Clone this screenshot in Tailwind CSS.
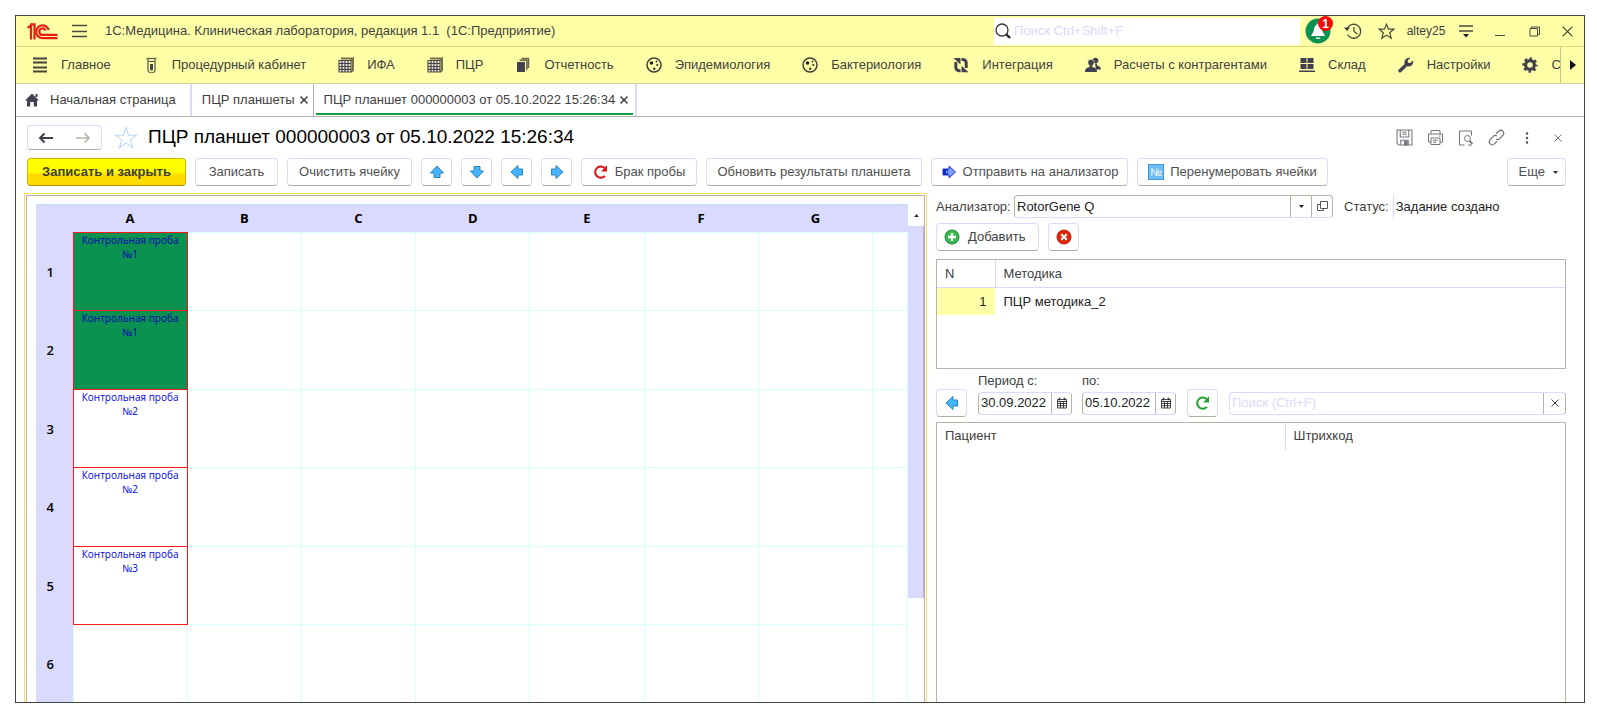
<!DOCTYPE html>
<html lang="ru">
<head>
<meta charset="utf-8">
<title>1С:Медицина. Клиническая лаборатория</title>
<script src="https://cdn.jsdelivr.net/npm/@tailwindcss/browser@4"></script>
</head>
<body class="flex h-screen flex-col overflow-hidden bg-white px-[15px] pt-[15px] pb-[14px] font-['Liberation_Sans',Arial,sans-serif] text-[13px] text-[#404040]">

<svg class="hidden" aria-hidden="true">
  <defs>
    <symbol id="arrow" viewBox="0 0 16 16"><path d="M8 2 14.500 9H11v4.500H5V9H1.500z" fill="#46b4ff" stroke="#2a86b8" stroke-width="1" stroke-linejoin="round"/></symbol>
    <symbol id="plate" viewBox="0 0 16 16"><path d="M13 3.500 15 1.500V13l-2 2M3 1.500h12" fill="none" stroke="#77704c" stroke-width="2"/><path d="M1 3.500h12V15H1z" fill="#f4f0d8" stroke="#55503c" stroke-width="1.200"/><path d="M4 3.500V15M7 3.500V15M10 3.500V15M1 6.500h12M1 9.500h12M1 12.300h12" stroke="#404050" stroke-width="1.200"/></symbol>
    <symbol id="germ" viewBox="0 0 16 16"><circle cx="8" cy="8" r="7" fill="none" stroke="#403f3a" stroke-width="1.500"/><circle cx="5.500" cy="6" r="1.800" fill="#222"/><circle cx="10.500" cy="4.500" r=".9" fill="#333"/><circle cx="11.300" cy="8" r="1.100" fill="#333"/><circle cx="8.200" cy="11.800" r="1.200" fill="#333"/></symbol>
    <symbol id="cross" viewBox="0 0 10 10"><path d="M1.500 1.500l7 7M8.500 1.500l-7 7" stroke="currentColor" fill="none"/></symbol>
    <symbol id="calendar" viewBox="0 0 12 12"><path d="M1.500 2.500h9v8.500h-9zM1.500 4.500h9M4.500 4.500V11M7.500 4.500V11M1.500 6.500h9M1.500 8.700h9" fill="none" stroke="#333" stroke-width=".9"/><path d="M3.500.8v2.400M8.500.8v2.400" stroke="#333" stroke-width="1.500"/></symbol>
    <symbol id="reload" viewBox="0 0 16 16"><path d="M12 11.800A5.600 5.600 0 1 1 11.600 4" fill="none" stroke="currentColor" stroke-width="2"/><path d="M14 1.200V7.500H8.200z" fill="currentColor"/></symbol>
  </defs>
</svg>

<div class="flex min-h-0 flex-1 flex-col overflow-hidden border border-[#45453c]">

  <!-- Title bar -->
  <header class="flex h-[31px] shrink-0 items-center border-b border-[#e3d578] bg-[#ffffa8]">
    <svg class="ml-[11px] h-[17px] w-[31px] shrink-0" viewBox="0 0 31 17" fill="none" stroke="#ea1c14" role="img" aria-label="1С">
      <path d="M.5 5 4 2.300V16.500" stroke-width="2.200"/><path d="M3.500 1.300H7.500V16.500" stroke-width="2.200"/>
      <path d="M21.700 7A6.400 6.400 0 1 0 15.800 15.200H30.500" stroke-width="2.200"/>
      <path d="M18.500 7.500A3.200 3.200 0 1 0 15.800 11.800H30.500" stroke-width="2.200"/>
    </svg>
    <button class="ml-[13px] h-6 w-[17px]" aria-label="Меню"><svg class="h-4 w-[17px]" viewBox="0 0 17 16"><path d="M1 2.500h15M1 8.500h15M1 13.500h15" stroke="#4b4a3c" stroke-width="1.300"/></svg></button>
    <h1 class="ml-[17px] whitespace-pre">1С:Медицина. Клиническая лаборатория, редакция 1.1  (1С:Предприятие)</h1>
    <label class="ml-auto flex h-[27px] w-[306px] items-center gap-[3px] bg-white pl-px">
      <svg class="size-4 shrink-0" viewBox="0 0 16 16"><circle cx="7" cy="7" r="6" fill="none" stroke="#3a3a30" stroke-width="1.300"/><path d="M11.500 11.500l3.500 3.500" stroke="#222" stroke-width="2.400"/></svg>
      <input class="min-w-0 flex-1 outline-none placeholder:text-[#dadaff]" type="text" placeholder="Поиск Ctrl+Shift+F" aria-label="Поиск">
    </label>
    <div class="flex items-center">
      <button class="relative flex w-[36px] justify-center" aria-label="Оповещения">
        <svg class="size-[26px]" viewBox="0 0 26 26"><circle cx="13" cy="13" r="12.500" fill="#0b9150"/><path d="M13 5.500c-1 0-1.500.7-1.500 1.500-2 1-2.500 3-2.800 6L6 18h14l-2.700-5c-.3-3-.8-5-2.800-6 0-.8-.5-1.500-1.500-1.500z" fill="#fff"/><path d="M10.500 19.500h5c-.5 2-4.500 2-5 0z" fill="#fff"/></svg>
        <span class="absolute -top-0.5 right-[3px] flex size-[15px] items-center justify-center rounded-full bg-[#fb0505] text-[12px] font-bold leading-none text-white">1</span>
      </button>
      <button class="flex w-[34px] justify-center" aria-label="История"><svg class="h-4 w-[18px]" viewBox="0 0 18 16" fill="none" stroke="#4a4a40" stroke-width="1.300"><path d="M3.500 5A7 7 0 1 1 3.500 11.500"/><path d="M10 4v4.500l3.500 2.500"/><path d="M0 4.500h6L3 8z" fill="#333" stroke="none"/></svg></button>
      <button class="flex w-[33px] justify-center" aria-label="Избранное"><svg class="size-[17px]" viewBox="0 0 17 17"><path d="M8.500 1.200l2 5h5.300l-4.200 3.500 1.700 5.600-4.800-3.200-4.800 3.200 1.700-5.600L1.200 6.200h5.300z" fill="none" stroke="#4a4a40" stroke-width="1.200"/></svg></button>
      <button class="w-[46px] text-center text-xs">altey25</button>
      <button class="flex w-[34px] justify-center" aria-label="Сервис"><svg class="h-[14px] w-4" viewBox="0 0 16 14"><path d="M1 2h14M1 7h14" stroke="#4a4a40" stroke-width="1.300"/><path d="M5 10h6l-3 3.500z" fill="#222"/></svg></button>
      <button class="flex w-[34px] justify-center" aria-label="Свернуть"><svg class="h-3 w-2.5" viewBox="0 0 10 12"><path d="M0 10.500h10" stroke="#4a4a40"/></svg></button>
      <button class="flex w-[34px] justify-center" aria-label="Развернуть"><svg class="size-[11px]" viewBox="0 0 11 11" fill="none" stroke="#4a4a40"><path d="M1 2.500h7.500V10H1zM2.500 2.500V1h8v7.500h-2"/></svg></button>
      <button class="flex w-[33px] justify-center" aria-label="Закрыть"><svg class="size-[11px]" viewBox="0 0 10 10"><path d="M.5.5l9 9M9.500.5l-9 9" stroke="#3a3a30"/></svg></button>
    </div>
  </header>

  <!-- Sections -->
  <nav class="flex h-[37px] shrink-0 items-center border-b border-[#d6d2a2] bg-[#ffffa8]">
    <div class="flex min-w-0 flex-1 items-center gap-8 overflow-hidden pl-4 whitespace-nowrap">
      <a href="#" class="flex shrink-0 items-center gap-[13px]"><svg class="size-4" viewBox="0 0 16 16"><path d="M1 1.500h14M1 5.500h14M1 10.500h14M1 14.500h14" stroke="#45433c" stroke-width="2"/></svg>Главное</a>
      <a href="#" class="flex shrink-0 items-center gap-[13px]"><svg class="size-4" viewBox="0 0 16 16"><path d="M3.500 1.500h10M5 1.500v11a3 3 0 0 0 7 0V1.500" fill="none" stroke="#77704c" stroke-width="1.500"/><path d="M7 7h3v5a1.500 1.500 0 0 1-3 0z" fill="#404058"/><path d="M6 4.500h5" stroke="#404058"/></svg>Процедурный кабинет</a>
      <a href="#" class="flex shrink-0 items-center gap-[13px]"><svg class="size-4"><use href="#plate"/></svg>ИФА</a>
      <a href="#" class="flex shrink-0 items-center gap-[13px]"><svg class="size-4"><use href="#plate"/></svg>ПЦР</a>
      <a href="#" class="flex shrink-0 items-center gap-[13px]"><svg class="size-4" viewBox="0 0 16 16"><path d="M2 5h8v10H2z" fill="#404050"/><path d="M4.500 3.300h7.300V13M6.500 1.500h7V11" fill="none" stroke="#6b6648" stroke-width="1.500"/></svg>Отчетность</a>
      <a href="#" class="flex shrink-0 items-center gap-[13px]"><svg class="size-4"><use href="#germ"/></svg>Эпидемиология</a>
      <a href="#" class="flex shrink-0 items-center gap-[13px]"><svg class="size-4"><use href="#germ"/></svg>Бактериология</a>
      <a href="#" class="flex shrink-0 items-center gap-[13px]"><svg class="size-4" viewBox="0 0 16 16"><path d="M7.500 13.700H6A3.500 3.500 0 0 1 2.800 10V5M8.500 2.500H10A3.500 3.500 0 0 1 13.200 6v5" fill="none" stroke="#404050" stroke-width="3"/><path d="M.5 1h7v6.500zM15.500 15.200h-7V8.700z" fill="#404050"/></svg>Интеграция</a>
      <a href="#" class="flex shrink-0 items-center gap-[13px]"><svg class="size-4" viewBox="0 0 16 16" fill="#404050"><circle cx="10.500" cy="3.500" r="2.800"/><path d="M10 6.500h2v2c2 .5 4 1.300 4 4h-5z"/><circle cx="6" cy="5.500" r="3.200" stroke="#ffffa8" stroke-width=".6"/><path d="M4.700 8h2.600v2c3 .5 4.700 1.500 4.700 5H0c0-3.500 1.700-4.500 4.700-5z"/></svg>Расчеты с контрагентами</a>
      <a href="#" class="flex shrink-0 items-center gap-[13px]"><svg class="size-4" viewBox="0 0 16 16" fill="#404050"><path d="M1.500 1h6v5h-6zM8.500 1h6v5h-6zM1.500 7h6v5h-6zM8.500 7h6v5h-6zM0 13.500h16V15H0z"/></svg>Склад</a>
      <a href="#" class="flex shrink-0 items-center gap-[13px]"><svg class="size-4" viewBox="0 0 16 16"><path d="M15 3.500 12.300 6 10 5.700 9.700 3.500 12.200 1A4.600 4.600 0 0 0 6.700 7L.8 12.600a1.600 1.600 0 0 0 2.400 2.400L9 9.200A4.600 4.600 0 0 0 15 3.500z" fill="#404050"/></svg>Настройки</a>
      <a href="#" class="flex shrink-0 items-center gap-[13px]"><svg class="size-4" viewBox="0 0 16 16"><circle cx="8" cy="8" r="4.400" fill="none" stroke="#404050" stroke-width="3.200"/><circle cx="8" cy="8" r="6.500" fill="none" stroke="#404050" stroke-width="2.400" stroke-dasharray="2.553 2.553" stroke-dashoffset="1.276"/></svg>С</a>
    </div>
    <button class="flex h-full w-6 shrink-0 items-center justify-center border-l border-[#c8c49a]" aria-label="Далее"><svg class="h-2.5 w-1.5" viewBox="0 0 6 10"><path d="M0 0l6 5-6 5z" fill="#111"/></svg></button>
  </nav>

  <!-- Open windows -->
  <div class="flex h-[33px] shrink-0 items-stretch border-b border-[#b4b4a8] whitespace-nowrap">
    <a href="#" class="flex items-center gap-2.5 border-r-2 border-[#dadaff] pr-3.5 pl-2"><svg class="size-4" viewBox="0 0 16 16"><path d="M8 1.500 15 8.500h-2V14.500H9.800V10H6.200v4.500H3v-6H1zM11.500 2h2v3h-2z" fill="#404050"/></svg>Начальная страница</a>
    <div class="flex items-center gap-1 border-r border-[#b4b4a8] pr-1 pl-2.5"><a href="#">ПЦР планшеты</a><button class="size-[10px]" aria-label="Закрыть вкладку"><svg class="size-[10px] stroke-[1.500px]"><use href="#cross"/></svg></button></div>
    <div class="flex border-r-2 border-[#dadaff] px-0.5"><div class="mb-px flex items-center gap-1 border-b-2 border-[#16a045] pt-0.5 pr-1 pl-2"><a href="#">ПЦР планшет 000000003 от 05.10.2022 15:26:34</a><button class="size-[10px]" aria-label="Закрыть вкладку"><svg class="size-[10px] stroke-[1.500px]"><use href="#cross"/></svg></button></div></div>
  </div>

  <main class="flex min-h-0 flex-1 flex-col pr-[18px] pl-[8px]">
    <!-- Form heading -->
    <div class="flex h-[41px] shrink-0 items-center pl-[3px]">
      <div class="flex h-[25px] w-[75px] rounded-sm border border-[#dadaff] border-b-[#b0b0a8]">
        <button class="flex flex-1 items-center justify-center" aria-label="Назад"><svg class="h-3 w-4" viewBox="0 0 16 12"><path d="M15 6H2M6.500 1.500 2 6l4.500 4.500" fill="none" stroke="#404048" stroke-width="2"/></svg></button>
        <button class="flex flex-1 items-center justify-center" aria-label="Вперед"><svg class="h-3 w-4" viewBox="0 0 16 12"><path d="M1 6h13M9.500 1.500 14 6l-4.500 4.500" fill="none" stroke="#b4b4a4" stroke-width="1.600"/></svg></button>
      </div>
      <button class="ml-3 size-6" aria-label="В избранное"><svg class="size-6" viewBox="0 0 24 24"><path d="M12 1.500l2.600 7.700h8l-6.500 4.700 2.500 7.900-6.600-4.900-6.600 4.900 2.500-7.900L1.400 9.200h8z" fill="none" stroke="#bcd8fb" stroke-width="1.100"/></svg></button>
      <h2 class="ml-2.5 text-[19px] text-black">ПЦР планшет 000000003 от 05.10.2022 15:26:34</h2>
      <div class="ml-auto flex items-center gap-[14px] text-[#74747e]">
        <button aria-label="Сохранить"><svg class="size-[17px]" viewBox="0 0 16 16" fill="none" stroke="currentColor"><path d="M1 1h14v14H2.500L1 13.500zM4 1v6.500h8V1M6 3h4M6 5h4M4.500 15v-4.500h7V15"/><path d="M8 11.500h2.500V15H8z" fill="currentColor"/></svg></button>
        <button aria-label="Печать"><svg class="size-[17px]" viewBox="0 0 17 17" fill="none" stroke="currentColor"><path d="M4 5V1.500h9V5M4 13H1.500V5h14v8H13M4 9h9v6.500H4zM6 11.300h5M6 13.300h3M12 7h1.500"/></svg></button>
        <button aria-label="Предпросмотр"><svg class="size-4" viewBox="0 0 16 16" fill="none" stroke="currentColor"><path d="M6.500 15h-5V1h12v4.500M10 15h4"/><circle cx="9.500" cy="8.500" r="3" fill="#fff"/><path d="M11.500 10.800l3 3" stroke-width="1.800"/></svg></button>
        <button aria-label="Ссылка"><svg class="size-[17px]" viewBox="0 0 16 16" fill="none" stroke="currentColor" stroke-width="1.200"><path d="M7.500 4.500 10 2a2.800 2.800 0 0 1 4 4l-3 3a2.500 2.500 0 0 1-3.300.4M8.500 11.500 6 14a2.800 2.800 0 0 1-4-4l3-3a2.500 2.500 0 0 1 3.300-.4"/></svg></button>
        <button aria-label="Еще действия"><svg class="size-4" viewBox="0 0 16 16" fill="#505058"><circle cx="8" cy="3.500" r="1.200"/><circle cx="8" cy="8" r="1.200"/><circle cx="8" cy="12.500" r="1.200"/></svg></button>
        <button class="flex size-[17px] items-center justify-center" aria-label="Закрыть форму"><svg class="size-[10px]"><use href="#cross"/></svg></button>
      </div>
    </div>

    <!-- Command bar -->
    <div class="flex shrink-0 items-center gap-[9px] pl-[3px] whitespace-nowrap text-[#505050]">
      <button class="h-[28px] w-[159px] rounded-sm border border-[#d8b400] border-b-[#b09000] bg-linear-to-b from-[#ffff00] from-50% to-[#ffdc00] to-60% font-bold text-[#404030]">Записать и закрыть</button>
      <button class="h-[28px] w-[83px] rounded-sm border border-[#dadaff] border-b-[#b0b0a8]">Записать</button>
      <button class="h-[28px] w-[125px] rounded-sm border border-[#dadaff] border-b-[#b0b0a8]">Очистить ячейку</button>
      <button class="flex h-[28px] w-[31px] items-center justify-center rounded-sm border border-[#dadaff] border-b-[#b0b0a8]" aria-label="Вверх"><svg class="size-4"><use href="#arrow"/></svg></button>
      <button class="flex h-[28px] w-[31px] items-center justify-center rounded-sm border border-[#dadaff] border-b-[#b0b0a8]" aria-label="Вниз"><svg class="size-4 rotate-180"><use href="#arrow"/></svg></button>
      <button class="flex h-[28px] w-[31px] items-center justify-center rounded-sm border border-[#dadaff] border-b-[#b0b0a8]" aria-label="Влево"><svg class="size-4 -rotate-90"><use href="#arrow"/></svg></button>
      <button class="flex h-[28px] w-[31px] items-center justify-center rounded-sm border border-[#dadaff] border-b-[#b0b0a8]" aria-label="Вправо"><svg class="size-4 rotate-90"><use href="#arrow"/></svg></button>
      <button class="flex h-[28px] w-[116px] items-center justify-center gap-1.5 rounded-sm border border-[#dadaff] border-b-[#b0b0a8]"><svg class="size-4 text-[#e01010]"><use href="#reload"/></svg>Брак пробы</button>
      <button class="h-[28px] w-[216px] rounded-sm border border-[#dadaff] border-b-[#b0b0a8]">Обновить результаты планшета</button>
      <button class="flex h-[28px] w-[197px] items-center justify-center gap-1.5 rounded-sm border border-[#dadaff] border-b-[#b0b0a8]"><svg class="size-4" viewBox="0 0 16 16"><path d="M2 5h6V2l6.500 6L8 14v-3H2z" fill="#7d98ff" stroke="#2334d8"/><path d="M2 5h5v6H2z" fill="#1528c8"/><path d="M5 6.500 7.500 8 5 9.500z" fill="#4ec8ff"/></svg>Отправить на анализатор</button>
      <button class="flex h-[28px] w-[191px] items-center justify-center gap-1.5 rounded-sm border border-[#dadaff] border-b-[#b0b0a8]"><span class="flex size-4 items-center justify-center border border-[#4a96dc] bg-[#6cbcf8] text-[11px] leading-none text-white">№</span>Перенумеровать ячейки</button>
      <button class="ml-auto flex h-[28px] w-[59px] items-center justify-end gap-2 rounded-sm border border-[#dadaff] border-b-[#b0b0a8] pr-[7px]">Еще<svg class="h-[3px] w-[5px]" viewBox="0 0 5 3"><path d="M0 0h5L2.500 3z" fill="#333"/></svg></button>
    </div>

    <div class="mt-[7px] grid min-h-0 flex-1 grid-cols-[903fr_630fr] gap-[9px]">
      <!-- Plate -->
      <section class="flex min-h-0 overflow-hidden border border-b-0 border-[#ffdc60] p-px pb-0">
        <div class="flex min-w-0 flex-1 overflow-hidden border border-b-0 border-[#b4b4a8] pt-2 pl-[9px]">
          <div class="min-w-0 flex-1 overflow-hidden">
            <table class="w-full table-fixed border-collapse font-['Open_Sans',sans-serif] text-black">
              <colgroup><col class="w-[37px]"><col><col><col><col><col><col><col><col class="w-[35px]"></colgroup>
              <thead>
                <tr class="h-[28px] border-t border-[#c0dcff] bg-[#dadaff] font-bold">
                  <th></th><th>A</th><th>B</th><th>C</th><th>D</th><th>E</th><th>F</th><th>G</th><th></th>
                </tr>
              </thead>
              <tbody id="wells" class="text-[10px] leading-[14px] whitespace-nowrap"></tbody>
            </table>
          </div>
          <div class="flex w-4 shrink-0 flex-col">
            <button class="flex h-[22px] items-center justify-center" aria-label="Прокрутить вверх"><svg class="h-[3px] w-[5px]" viewBox="0 0 5 3"><path d="M0 3h5L2.500 0z" fill="#333"/></svg></button>
            <div class="h-[372px] border-r border-[#bcb0c0] bg-[#dadaff]"></div>
          </div>
        </div>
      </section>

      <!-- Analyzer and patients -->
      <section class="flex min-h-0 min-w-0 flex-col overflow-hidden pt-0.5">
        <div class="flex shrink-0 items-center whitespace-nowrap">
          <label for="analyzer" class="w-[78px]">Анализатор:</label>
          <div class="flex h-[23px] w-[319px] rounded-sm border border-[#b4b4a8] border-b-[#dadaff]">
            <input id="analyzer" class="min-w-0 flex-1 px-0.5 text-[#222] outline-none" type="text" value="RotorGene Q">
            <button class="flex w-[21px] items-center justify-center border-l border-[#b4b4a8]" aria-label="Выбрать"><svg class="h-[3px] w-[5px]" viewBox="0 0 5 3"><path d="M0 0h5L2.500 3z" fill="#222"/></svg></button>
            <button class="flex w-[21px] items-center justify-center border-l border-[#b4b4a8]" aria-label="Открыть"><svg class="size-[11px]" viewBox="0 0 11 11" fill="none" stroke="#555"><path d="M3.500.5h7v7h-7zM3.500 3.500h-3v6h6v-2"/></svg></button>
          </div>
          <span class="ml-[11px]">Статус:</span>
          <output class="ml-1 border-l border-[#dadaff] py-0.5 pl-0.5 text-[#222]">Задание создано</output>
        </div>
        <div class="mt-1 flex shrink-0 gap-[9px]">
          <button class="flex h-[28px] items-center gap-2 rounded-sm border border-[#dadaff] border-b-[#b0b0a8] pr-[13px] pl-[7px]"><svg class="size-4" viewBox="0 0 16 16"><circle cx="8" cy="8" r="7" fill="#36b84c" stroke="#178a30"/><path d="M8 4v8M4 8h8" stroke="#fff" stroke-width="2.400"/></svg>Добавить</button>
          <button class="flex h-[28px] w-[31px] items-center justify-center rounded-sm border border-[#dadaff] border-b-[#b0b0a8]" aria-label="Удалить"><svg class="size-4" viewBox="0 0 16 16"><circle cx="8" cy="8" r="7" fill="#e02808" stroke="#b81c04"/><path d="M5.300 5.300l5.400 5.400M10.700 5.300l-5.400 5.400" stroke="#fff" stroke-width="2.200"/></svg></button>
        </div>
        <div class="mt-2 h-[110px] shrink-0 border border-[#b4b4a8]">
          <table class="w-full table-fixed border-collapse text-left">
            <colgroup><col class="w-[58px]"><col></colgroup>
            <thead><tr class="h-[28px] border-b border-[#dadaff]"><th class="border-r border-[#dadaff] pl-2 font-normal">N</th><th class="pl-2 font-normal">Методика</th></tr></thead>
            <tbody><tr class="h-[27px] text-[#222]"><td class="border-r border-white bg-[#ffffa8] pr-2 text-right">1</td><td class="pl-2">ПЦР методика_2</td></tr></tbody>
          </table>
        </div>
        <div class="mt-px flex shrink-0 items-end">
          <button class="flex h-[28px] w-[31px] items-center justify-center rounded-sm border border-[#dadaff] border-b-[#b0b0a8]" aria-label="Предыдущий период"><svg class="size-4 -rotate-90"><use href="#arrow"/></svg></button>
          <div class="ml-[11px] flex w-[94px] flex-col">
            <label for="from" class="leading-[22px]">Период с:</label>
            <div class="mb-0.5 flex h-[23px] rounded-sm border border-[#b4b4a8] border-t-[#dadaff] border-b-[#dadaff]">
              <input id="from" class="min-w-0 flex-1 px-0.5 text-[#222] outline-none" type="text" value="30.09.2022">
              <button class="flex w-5 items-center justify-center border-l border-[#b4b4a8]" aria-label="Календарь"><svg class="size-3"><use href="#calendar"/></svg></button>
            </div>
          </div>
          <div class="ml-[10px] flex w-[94px] flex-col">
            <label for="to" class="leading-[22px]">по:</label>
            <div class="mb-0.5 flex h-[23px] rounded-sm border border-[#b4b4a8] border-t-[#dadaff] border-b-[#dadaff]">
              <input id="to" class="min-w-0 flex-1 px-0.5 text-[#222] outline-none" type="text" value="05.10.2022">
              <button class="flex w-5 items-center justify-center border-l border-[#b4b4a8]" aria-label="Календарь"><svg class="size-3"><use href="#calendar"/></svg></button>
            </div>
          </div>
          <button class="ml-[11px] flex h-[28px] w-[31px] items-center justify-center rounded-sm border border-[#dadaff] border-b-[#b0b0a8]" aria-label="Обновить"><svg class="size-4 text-[#22a030]"><use href="#reload"/></svg></button>
          <div class="mb-0.5 ml-[11px] flex h-[23px] flex-1 rounded-sm border border-[#dadaff] border-r-[#b4b4a8]">
            <input class="min-w-0 flex-1 px-0.5 outline-none placeholder:text-[#dadaff]" type="text" placeholder="Поиск (Ctrl+F)" aria-label="Поиск пациента">
            <button class="flex w-[22px] items-center justify-center border-l border-[#b4b4a8]" aria-label="Очистить"><svg class="size-[10px]"><use href="#cross"/></svg></button>
          </div>
        </div>
        <div class="mt-[5px] min-h-0 flex-1 border border-b-0 border-[#b4b4a8]">
          <table class="w-full table-fixed border-collapse text-left">
            <colgroup><col class="w-[348px]"><col></colgroup>
            <thead><tr class="h-[27px]"><th class="border-r border-[#dadaff] pl-2 font-normal">Пациент</th><th class="pl-2 font-normal">Штрихкод</th></tr></thead>
          </table>
        </div>
      </section>
    </div>
  </main>
</div>

<script>
  const samples = [[1, true], [1, true], [2, false], [2, false], [3, false], null];
  const empty = '<td class="border border-[#d8ffff]"></td>';
  document.getElementById('wells').innerHTML = samples.map((sample, i) => {
    const height = i % 2 ? 'h-[79px]' : 'h-[78px]';
    const fill = sample && sample[1] ? 'bg-[#0b9150] bg-clip-padding text-[#0000b8]' : 'text-[#0000f0]';
    const first = sample
      ? `<td class="border border-[#ff1818] text-center align-top ${fill}">Контрольная проба<br>№${sample[0]}</td>`
      : empty;
    return `<tr class="${height}"><th class="bg-[#dadaff] pr-2 text-[13px] font-semibold">${i + 1}</th>${first}${empty.repeat(7)}</tr>`;
  }).join('');
</script>
</body>
</html>
